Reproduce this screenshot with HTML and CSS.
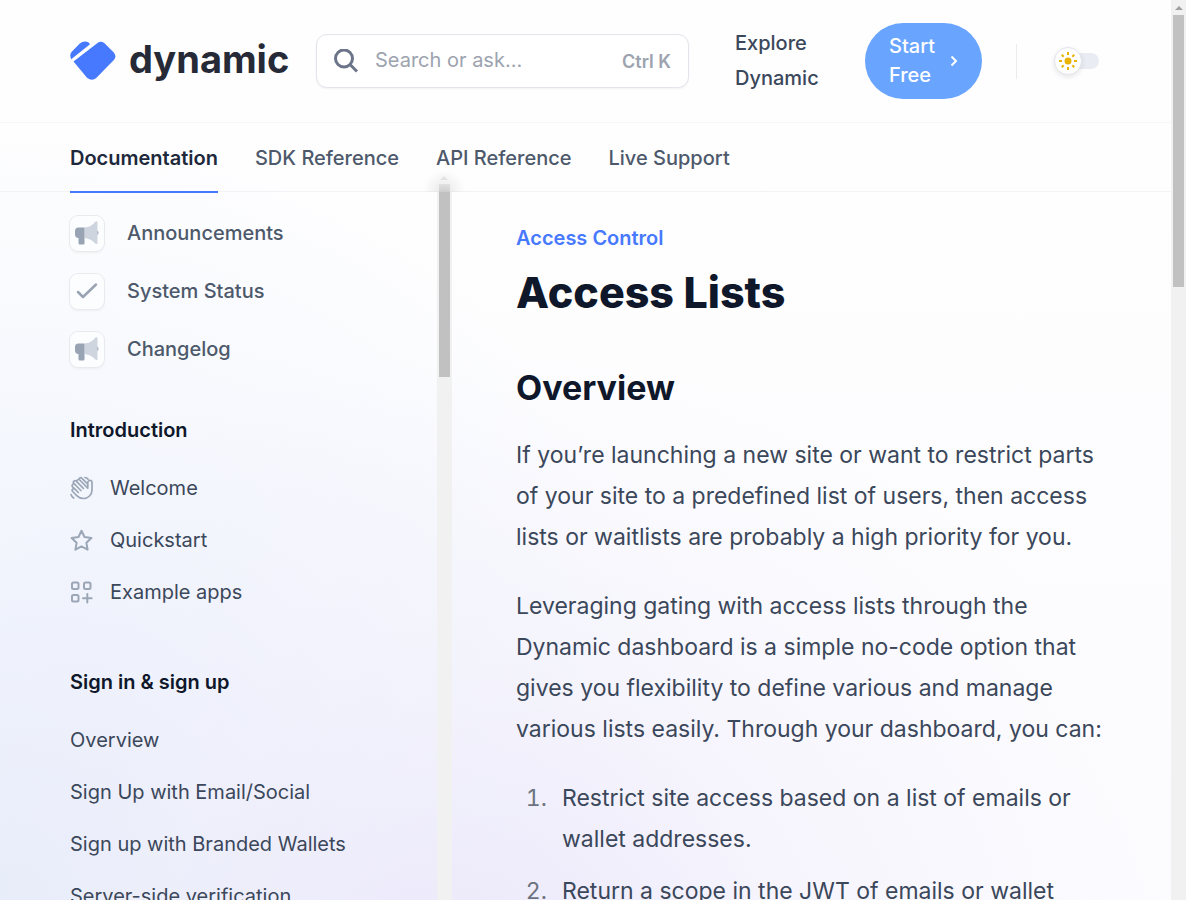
FILE: index.html
```html
<!DOCTYPE html>
<html lang="en">
<head>
<meta charset="utf-8">
<title>Access Lists - Dynamic</title>
<link rel="stylesheet" href="styles.css">
</head>
<body>
<svg class="defs" aria-hidden="true">
  <symbol id="horn" viewBox="0 0 24 24">
    <path d="M22 9.500a2.500 2.500 0 0 1 0 4.600z" fill="#94a3b8"/>
    <path d="M9.500 6.500C14 6.500 18 3.800 20.300.8c.7-.9 2.200-.5 2.200.7v20.400c0 1.200-1.500 1.600-2.200.7C18 19.500 14 17.500 9.500 17z" fill="#cfd5de"/>
    <path d="M3.500 6.500h6V22c0 1-.6 1.500-1.500 1.500H5c-1 0-1.500-.6-1.500-1.500v-5A3.500 3.500 0 0 1 0 13.600V10a3.500 3.500 0 0 1 3.500-3.500z" fill="#98a3b3"/>
  </symbol>
</svg>
<div class="page">
  <header class="header">
    <div class="topbar">
      <a class="logo" href="#">
        <svg class="logo-mark" viewBox="0 0 46 40" aria-hidden="true">
          <path d="M3.500 20.500 27.500 2q3.500-2.400 7 .3L43.800 11.500q3 3.600.3 7.200L26.500 36.800q-4.500 4-9.500 0z" fill="#4779ff"/>
          <path d="M1.200 18.200Q-1 13.500 2 10.500L9.500 2.800q4.300-3.700 9.200-1.300l1.300 1.700z" fill="#4779ff"/>
        </svg>
        <span class="logo-text">dynamic</span>
      </a>
      <label class="search">
        <svg class="search-icon" viewBox="0 0 24 24" fill="none" stroke="#6b7489" stroke-width="3" aria-hidden="true"><circle cx="10" cy="9.500" r="8.500"/><path d="m16 15.500 7 7"/></svg>
        <input class="search-input" type="text" placeholder="Search or ask..." aria-label="Search or ask">
        <span class="shortcut">Ctrl K</span>
      </label>
      <a class="explore" href="#">Explore Dynamic</a>
      <a class="start" href="#"><span>Start Free</span>
        <svg class="chevron" viewBox="0 0 8 12" fill="none" stroke="#fff" stroke-width="2" aria-hidden="true"><path d="m1.500 1.500 4.500 4.500-4.500 4.500"/></svg>
      </a>
      <span class="divider"></span>
      <button class="toggle" type="button" aria-label="Toggle dark mode">
        <span class="knob">
          <svg class="sun" viewBox="0 0 20 20" aria-hidden="true"><circle cx="10" cy="10" r="3.500" fill="#eab308"/><path d="M10 1v3M10 16v3M1 10h3M16 10h3M3.800 3.800l1.900 1.900M14.300 14.300l1.900 1.900M16.200 3.800l-1.900 1.900M5.700 14.300l-1.900 1.900" stroke="#eab308" stroke-width="2"/></svg>
        </span>
      </button>
    </div>
    <nav class="tabs">
      <a class="tab tab-active" href="#">Documentation</a>
      <a class="tab" href="#">SDK Reference</a>
      <a class="tab" href="#">API Reference</a>
      <a class="tab" href="#">Live Support</a>
    </nav>
  </header>
  <div class="columns">
    <aside class="sidebar">
      <nav class="side-nav">
        <ul class="anchors">
          <li><a class="anchor" href="#"><span class="tile"><svg class="tile-icon" aria-hidden="true"><use href="#horn"/></svg></span>Announcements</a></li>
          <li><a class="anchor" href="#"><span class="tile"><svg class="tile-icon" viewBox="0 0 24 24" fill="none" stroke="#98a3b3" stroke-width="2.500" stroke-linecap="round" stroke-linejoin="round" aria-hidden="true"><path d="m3 13 5 5L21 5.500"/></svg></span>System Status</a></li>
          <li><a class="anchor" href="#"><span class="tile"><svg class="tile-icon" aria-hidden="true"><use href="#horn"/></svg></span>Changelog</a></li>
        </ul>
        <section class="group">
          <h2 class="group-title">Introduction</h2>
          <ul class="links">
            <li><a class="link" href="#"><svg class="link-icon" viewBox="0 0 24 24" aria-hidden="true"><path stroke-width="1.700" d="M17.800 11V6.500a2.100 2.100 0 0 1 4.200 0V14a8.500 8.500 0 0 1-8.500 8.500c-2.800 0-4.800-1-6.500-2.700L2.700 15.500A1.600 1.600 0 0 1 5 13.200l3.300 3.300M5.700 13.900 2.600 10.800a1.600 1.600 0 0 1 2.300-2.300l6 6M5.600 9.200 3.900 7.400a1.600 1.600 0 0 1 2.300-2.300l7.200 7.200M7.400 6.300a1.600 1.600 0 0 1 2.300-2.300l8.100 8.100M9.200 3.500A1.600 1.600 0 0 1 12 2.300l5.800 5.800M15 1.500c1.200.1 2.200.7 3 1.600M1 18.500c.5 1.500 1.400 2.700 2.700 3.500"/></svg>Welcome</a></li>
            <li><a class="link" href="#"><svg class="link-icon" viewBox="0 0 24 24" aria-hidden="true"><path d="m11.500 2.700 3 6.300 6.900 1-5 4.800 1.200 6.900-6.100-3.300-6.100 3.300 1.200-6.900-5-4.800 6.900-1z"/></svg>Quickstart</a></li>
            <li><a class="link" href="#"><svg class="link-icon" viewBox="0 0 24 24" aria-hidden="true"><g stroke-width="2"><rect x="2" y="2.500" width="6.500" height="6.500" rx="1.500"/><rect x="14" y="2.500" width="6.500" height="6.500" rx="1.500"/><rect x="2" y="15" width="6.500" height="6.500" rx="1.500"/><path d="M17.300 14v8.600M13 18.300h8.600"/></g></svg>Example apps</a></li>
          </ul>
        </section>
        <section class="group">
          <h2 class="group-title">Sign in &amp; sign up</h2>
          <ul class="links">
            <li><a class="link" href="#">Overview</a></li>
            <li><a class="link" href="#">Sign Up with Email/Social</a></li>
            <li><a class="link" href="#">Sign up with Branded Wallets</a></li>
            <li><a class="link" href="#">Server-side verification</a></li>
          </ul>
        </section>
      </nav>
      <div class="side-track"><div class="side-thumb"></div></div>
      <div class="side-haze"><i class="arrow haze-arrow"></i></div>
    </aside>
    <main class="content">
      <p class="eyebrow">Access Control</p>
      <h1 class="title">Access Lists</h1>
      <h2 class="heading">Overview</h2>
      <p class="text">If you’re launching a new site or want to restrict parts of your site to a predefined list of users, then access lists or waitlists are probably a high priority for you.</p>
      <p class="text">Leveraging gating with access lists through the Dynamic dashboard is a simple no-code option that gives you flexibility to define various and manage various lists easily. Through your dashboard, you can:</p>
      <ol class="steps">
        <li>Restrict site access based on a list of emails or wallet addresses.</li>
        <li>Return a scope in the JWT of emails or wallet</li>
      </ol>
    </main>
  </div>
</div>
<div class="page-track"><i class="arrow"></i><div class="page-thumb"></div></div>
</body>
</html>
```

FILE: styles.css
```css
* { box-sizing: border-box; }
body {
  margin: 0;
  display: flex;
  height: 100vh;
  overflow: hidden;
  font-family: Inter, "Liberation Sans", sans-serif;
  font-size: 20px;
  line-height: 29px;
  color: #3b475a;
  background: #fff;
}
a { color: inherit; text-decoration: none; }
h1, h2, p, ul, ol { margin: 0; padding: 0; }
ul { list-style: none; }
.defs { position: absolute; width: 0; height: 0; }
.page {
  flex: 1;
  min-width: 0;
  display: flex;
  flex-direction: column;
  background:
    radial-gradient(ellipse 720px 620px at 40% 108%, #ebe7fae6 0%, #f0edfb80 45%, transparent 100%),
    radial-gradient(ellipse 760px 820px at 0% 105%, #e3ecf9 0%, #ebf1fc99 50%, transparent 100%),
    linear-gradient(#fefefe, #fcfcff);
}
.header { position: relative; }
.topbar {
  display: flex;
  align-items: center;
  min-height: 123px;
  padding: 0 70px;
  border-bottom: 1px solid #f5f6f8;
}
.logo { display: flex; align-items: center; gap: 13px; width: 220px; margin-right: 26px; }
.logo-mark { width: 46px; height: 40px; flex: none; }
.logo-text { padding-bottom: 4px; font-size: 38px; line-height: 44px; font-weight: 700; color: #262a36; }
.search {
  flex: 1;
  min-width: 0;
  display: flex;
  align-items: center;
  height: 54px;
  padding: 0 17px;
  gap: 17px;
  background: #fff;
  border: 1px solid #e3e5eb;
  border-radius: 11px;
  box-shadow: 0 1px 2px #0000000d;
}
.search-icon { width: 24px; height: 24px; flex: none; }
.search-input { flex: 1; min-width: 0; border: 0; padding: 0 0 2px; background: none; font: inherit; outline: 0; }
.search-input::placeholder { color: #9ca3af; opacity: 1; }
.shortcut { font-size: 18px; font-weight: 600; color: #9ca3af; }
.explore { width: 84px; margin: 0 46px; line-height: 35px; font-weight: 500; }
.start {
  display: flex;
  align-items: center;
  gap: 12px;
  width: 117px;
  padding: 9px 24px;
  border-radius: 38px;
  background: #69a4ff;
  color: #fff;
  font-weight: 500;
}
.chevron { width: 8px; height: 12px; flex: none; }
.divider { width: 1px; height: 35px; margin: 0 37px 0 34px; background: #e9ebef; }
.toggle {
  display: flex;
  align-items: center;
  width: 45px;
  height: 16px;
  margin-right: 2px;
  padding: 0;
  border: 0;
  border-radius: 8px;
  background: linear-gradient(90deg, transparent 40%, #e9edf3 40%);
}
.knob { display: grid; place-items: center; width: 28px; height: 28px; flex: none; border: 1px solid #e2e5ec; border-radius: 50%; background: #fff; box-shadow: 0 2px 5px #0f172a1a; }
.sun { width: 20px; height: 20px; }
.tabs { display: flex; gap: 37px; padding: 0 70px; height: 69px; border-bottom: 1px solid #f2f3f6; color: #4d596b; font-weight: 500; }
.tab { height: 70px; padding-top: 21px; white-space: nowrap; }
.tab-active { color: #1e293b; font-weight: 600; border-bottom: 2px solid #4779ff; }
.columns { flex: 1; min-height: 0; display: flex; }
.sidebar { position: relative; display: flex; flex: none; width: 452px; }
.side-nav { flex: 1; min-width: 0; overflow: hidden; padding: 12px 20px 0 70px; }
.anchor { display: flex; align-items: center; gap: 23px; height: 58px; color: #4d596b; font-weight: 500; }
.tile { display: grid; place-items: center; width: 34px; height: 35px; border-radius: 8px; background: #fcfdff; box-shadow: 0 0 0 1px #e8eaee, 0 2px 3px #0000000d; }
.tile-icon { width: 24px; height: 24px; }
.group { margin-top: 38px; }
.group + .group { margin-top: 50px; }
.group-title { margin-bottom: 17px; font-size: 20px; line-height: 29px; font-weight: 600; color: #0f172a; }
.link { display: flex; align-items: center; gap: 16px; height: 52px; white-space: nowrap; }
.link-icon { width: 24px; height: 24px; flex: none; fill: none; stroke: #9ba6b6; stroke-width: 2; stroke-linecap: round; stroke-linejoin: round; }
.side-track { width: 15px; padding: 0 2px; background: #f1f1f1; }
.side-thumb { height: 185px; background: #c1c1c1; }
.side-haze {
  position: absolute;
  right: -13px;
  top: -22px;
  width: 42px;
  height: 22px;
  display: flex;
  justify-content: center;
  background:
    linear-gradient(transparent 64%, #c1c1c155 64%, #c1c1c1aa) center / 11px 100% no-repeat,
    radial-gradient(ellipse at 50% 100%, #d4d4d488, transparent 70%);
}
.arrow { width: 0; height: 0; border: 4px solid transparent; border-top: 0; border-bottom-color: #a0a0a0; }
.haze-arrow { margin-top: 6px; border-bottom-color: #e3e3e3; }
.content { flex: 1; min-width: 0; overflow: hidden; padding: 32px 64px 0; }
.eyebrow { font-weight: 600; color: #4779ff; }
.title { margin-top: 13px; font-size: 43px; line-height: 52px; font-weight: 800; color: #0f172a; }
.heading { margin: 47px 0 24px; font-size: 34px; line-height: 46px; font-weight: 700; color: #0f172a; }
.text, .steps { font-size: 23px; line-height: 41px; margin-bottom: 28px; }
.steps { padding-left: 37px; }
.steps li { padding-left: 9px; margin-bottom: 11px; }
.steps li::marker { color: #6b7280; }
.page-track { display: flex; flex-direction: column; align-items: center; flex: none; width: 15px; padding-top: 6px; background: #f1f1f1; }
.page-thumb { width: 11px; height: 272px; margin-top: 5px; background: #c1c1c1; }
```
